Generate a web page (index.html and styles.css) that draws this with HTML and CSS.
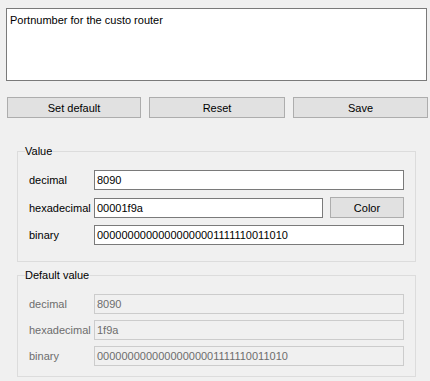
FILE: index.html
```html
<!DOCTYPE html>
<html>
<head>
<meta charset="utf-8">
<link rel="stylesheet" href="styles.css">
</head>
<body>
<div class="page">
  <div class="desc">Portnumber for the custo router</div>
  <div class="actions">
    <div class="btn">Set default</div>
    <div class="btn">Reset</div>
    <div class="btn">Save</div>
  </div>
  <div class="group">
    <div class="group-title">Value</div>
    <div class="rows">
      <div class="row">
        <div class="label">decimal</div>
        <div class="field">8090</div>
      </div>
      <div class="row">
        <div class="label">hexadecimal</div>
        <div class="field-with-btn">
          <div class="field">00001f9a</div>
          <div class="btn color-btn">Color</div>
        </div>
      </div>
      <div class="row">
        <div class="label">binary</div>
        <div class="field">00000000000000000001111110011010</div>
      </div>
    </div>
  </div>
  <div class="group group-default">
    <div class="group-title">Default value</div>
    <div class="rows">
      <div class="row">
        <div class="label">decimal</div>
        <div class="field">8090</div>
      </div>
      <div class="row">
        <div class="label">hexadecimal</div>
        <div class="field">1f9a</div>
      </div>
      <div class="row">
        <div class="label">binary</div>
        <div class="field">00000000000000000001111110011010</div>
      </div>
    </div>
  </div>
</div>
</body>
</html>
```

FILE: styles.css
```css
html, body {
  margin: 0;
  padding: 0;
  background: #f0f0f0;
}
body {
  font-family: "Liberation Sans", Arial, sans-serif;
  font-size: 11px;
  color: #000;
  width: 430px;
  height: 381px;
  overflow: hidden;
}
.page {
  padding: 8px 3px 0 6px;
  display: flex;
  flex-direction: column;
}
.desc {
  box-sizing: border-box;
  height: 73px;
  border: 1px solid #7a7a7a;
  background: #fff;
  padding: 4px 3px;
  line-height: 14px;
}
.actions {
  margin-top: 16px;
  padding-left: 1px;
  display: grid;
  grid-template-columns: 134px 136px 135px;
  column-gap: 8px;
}
.btn {
  height: 21px;
  box-sizing: border-box;
  border: 1px solid #adadad;
  background: #e1e1e1;
  display: flex;
  align-items: center;
  justify-content: center;
  line-height: 14px;
}
.group {
  position: relative;
  margin: 33px 11px 0 11px;
  border: 1px solid #dcdcdc;
  padding: 18px 11px 16px 11px;
}
.group-default {
  margin-top: 13px;
  padding-bottom: 10px;
}
.group-title {
  position: absolute;
  top: -8px;
  left: 7px;
  padding: 0 1px 0 0;
  background: #f0f0f0;
  line-height: 14px;
}
.rows {
  display: flex;
  flex-direction: column;
  gap: 7px;
}
.row {
  display: grid;
  grid-template-columns: 65px 1fr;
  align-items: center;
}
.label {
  line-height: 14px;
}
.field {
  height: 20px;
  box-sizing: border-box;
  border: 1px solid #7a7a7a;
  background: #fff;
  padding: 0 2px;
  line-height: 18px;
  white-space: nowrap;
  overflow: hidden;
}
.field-with-btn {
  display: grid;
  grid-template-columns: 1fr 74px;
  column-gap: 7px;
  align-items: center;
}
.color-btn {
  height: 21px;
}
.group-default .rows {
  gap: 6px;
}
.group-default .label {
  color: #6d6d6d;
}
.group-default .field {
  border-color: #cccccc;
  background: #f0f0f0;
  color: #6d6d6d;
}
```
